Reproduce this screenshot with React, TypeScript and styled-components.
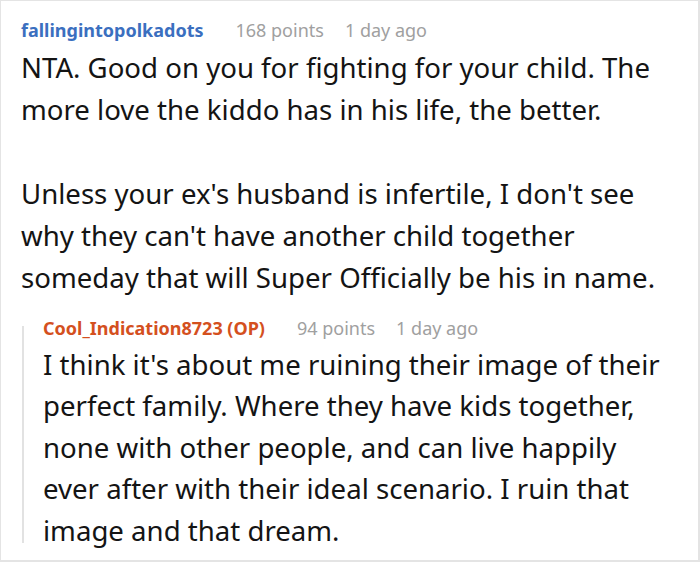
import React from "react";
import styled, { createGlobalStyle } from "styled-components";

const Global = createGlobalStyle`
  html, body { margin: 0; padding: 0; background: #ffffff; }
  * { box-sizing: border-box; }
`;

const Card = styled.div`
  width: 700px;
  height: 562px;
  border: 1px solid #e4e4e4;
  border-bottom-width: 2px;
  border-right-width: 2px;
  padding: 18px 6px 0 20px;
  font-family: "Noto Sans", "Open Sans", sans-serif;
  background: #ffffff;
  overflow: hidden;
`;

const Header = styled.div`
  display: flex;
  align-items: baseline;
  font-size: 18px;
  line-height: 22px;
  white-space: nowrap;
`;

const Author = styled.span<{ $op?: boolean }>`
  font-weight: 700;
  color: ${(p) => (p.$op ? "#d4501e" : "#3b6fbf")};
`;

const Meta = styled.span<{ $gap: number }>`
  color: #a0a0a0;
  margin-left: ${(p) => p.$gap}px;
`;

const Body = styled.div<{ $lh: number }>`
  margin-top: 5px;
  font-size: 27.6px;
  line-height: ${(p) => p.$lh}px;
  color: #141414;
`;

const Para = styled.p<{ $lh: number }>`
  margin: 0;
  & + & { margin-top: ${(p) => p.$lh}px; }
`;

const Reply = styled.div`
  display: flex;
  margin-top: 19px;
  margin-left: 1px;
`;

const Rule = styled.div`
  width: 2px;
  flex: none;
  background: #e2e2e2;
  margin: 9px 0 8px 0;
`;

const ReplyContent = styled.div`
  padding: 0 18px 0 19px;
  flex: 1;
`;

export default function App() {
  return (
    <>
      <Global />
      <Card>
        <Header>
          <Author>fallingintopolkadots</Author>
          <Meta $gap={32}>168 points</Meta>
          <Meta $gap={21}>1 day ago</Meta>
        </Header>
        <Body $lh={42}>
          <Para $lh={42}>
            NTA. Good on you for fighting for your child. The more love the kiddo has in his life, the better.
          </Para>
          <Para $lh={42}>
            Unless your ex's husband is infertile, I don't see why they can't have another child together someday that will Super Officially be his in name.
          </Para>
        </Body>
        <Reply>
          <Rule />
          <ReplyContent>
            <Header>
              <Author $op>Cool_Indication8723 (OP)</Author>
              <Meta $gap={32}>94 points</Meta>
              <Meta $gap={21}>1 day ago</Meta>
            </Header>
            <Body $lh={41.5}>
              <Para $lh={41.5}>
                I think it's about me ruining their image of their perfect family. Where they have kids together, none with other people, and can live happily ever after with their ideal scenario. I ruin that image and that dream.
              </Para>
            </Body>
          </ReplyContent>
        </Reply>
      </Card>
    </>
  );
}
